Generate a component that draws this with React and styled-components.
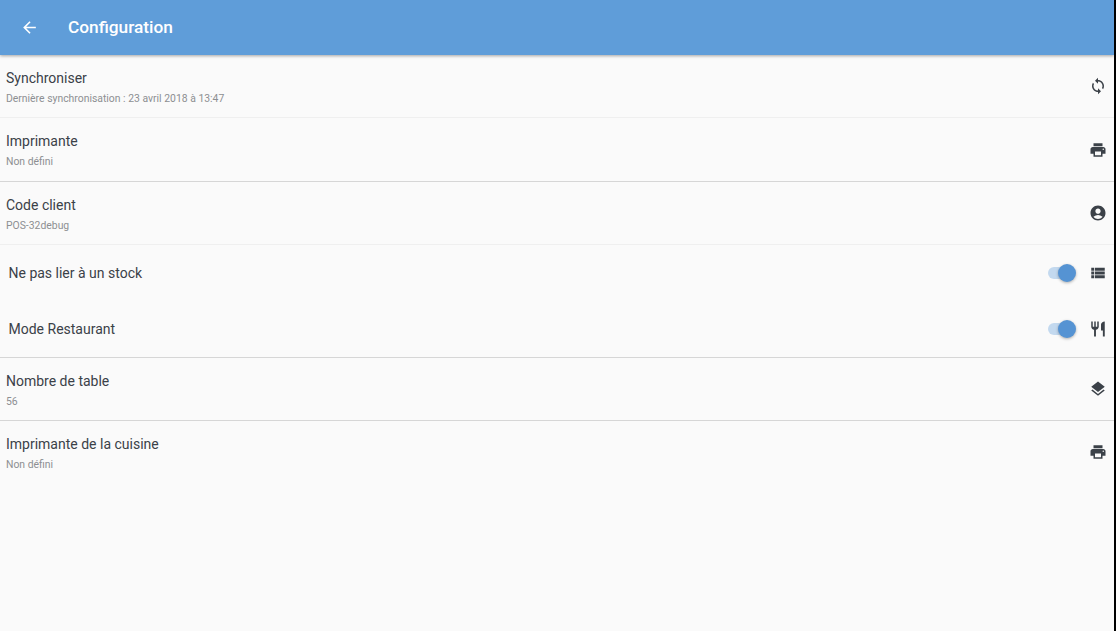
import React from 'react';
import styled, { createGlobalStyle } from 'styled-components';
import { MdArrowBack, MdSync, MdPrint, MdAccountCircle, MdViewList, MdRestaurant, MdLayers } from 'react-icons/md';

const GlobalStyle = createGlobalStyle`
  html, body {
    margin: 0;
    padding: 0;
    background: #000;
    overflow: hidden;
  }
  body {
    font-family: Roboto, "Liberation Sans", sans-serif;
  }
`;

const Page = styled.div`
  width: 1114px;
  height: 631px;
  background: #fafafa;
  display: flex;
  flex-direction: column;
`;

const Toolbar = styled.header`
  height: 55px;
  flex: none;
  background: #5f9dd9;
  color: #fff;
  display: flex;
  align-items: center;
  padding-left: 20px;
  box-shadow: 0 1px 3px rgba(0, 0, 0, 0.35);
  position: relative;
`;

const BackIcon = styled(MdArrowBack)`
  font-size: 19px;
  margin-top: -1px;
`;

const Title = styled.h1`
  margin: -1px 0 0 29px;
  font-size: 17.3px;
  font-weight: 500;
  color: #fff;
`;

const List = styled.div`
  display: flex;
  flex-direction: column;
`;

const Row = styled.div`
  height: ${p => p.$height}px;
  box-sizing: border-box;
  display: flex;
  align-items: center;
  justify-content: space-between;
  padding: 0 7px 0 6px;
  border-bottom: 1px solid ${p => (p.$line === 'strong' ? '#d6d6d6' : p.$line === 'light' ? '#efefef' : 'transparent')};
`;

const TextBlock = styled.div`
  display: flex;
  flex-direction: column;
  gap: 6px;
  padding-top: 3px;
`;

const Label = styled.div`
  font-size: 14px;
  line-height: 16px;
  color: #3b4148;
`;

const Sub = styled.div`
  font-size: 10.4px;
  line-height: 14px;
  color: #8d8f92;
`;

const ToggleLabel = styled(Label)`
  padding-left: 2.5px;
`;

const RowIcon = styled.span`
  display: flex;
  align-items: center;
  justify-content: center;
  width: 18px;
  height: 18px;
  font-size: ${p => p.$size || 18}px;
  color: #3b4148;
`;

const Controls = styled.div`
  display: flex;
  align-items: center;
  gap: 14px;
`;

const Switch = styled.span`
  display: block;
  position: relative;
  width: 27px;
  height: 12px;
  border-radius: 6px;
  background: #c3d9ef;
`;

const Knob = styled.span`
  position: absolute;
  top: -3px;
  right: -1px;
  width: 18px;
  height: 18px;
  border-radius: 50%;
  background: #5593d3;
  box-shadow: 0 1px 3px rgba(0, 0, 0, 0.3);
`;

const rows = [
  { type: 'info', label: 'Synchroniser', sub: 'Dernière synchronisation : 23 avril 2018 à 13:47', icon: MdSync, height: 63, line: 'light' },
  { type: 'info', label: 'Imprimante', sub: 'Non défini', icon: MdPrint, height: 64, line: 'strong' },
  { type: 'info', label: 'Code client', sub: 'POS-32debug', icon: MdAccountCircle, height: 63, line: 'light' },
  { type: 'toggle', label: 'Ne pas lier à un stock', icon: MdViewList, iconSize: 20, height: 56 },
  { type: 'toggle', label: 'Mode Restaurant', icon: MdRestaurant, height: 57, line: 'strong' },
  { type: 'info', label: 'Nombre de table', sub: '56', icon: MdLayers, height: 63, line: 'strong' },
  { type: 'info', label: 'Imprimante de la cuisine', sub: 'Non défini', icon: MdPrint, height: 63 },
];

const App = () => {
  return (
    <Page>
      <GlobalStyle />
      <Toolbar>
        <BackIcon />
        <Title>Configuration</Title>
      </Toolbar>
      <List>
        {rows.map(row => (
          <Row key={row.label} $height={row.height} $line={row.line}>
            {row.type === 'info' ? (
              <TextBlock>
                <Label>{row.label}</Label>
                <Sub>{row.sub}</Sub>
              </TextBlock>
            ) : (
              <ToggleLabel>{row.label}</ToggleLabel>
            )}
            <Controls>
              {row.type === 'toggle' && (
                <Switch>
                  <Knob />
                </Switch>
              )}
              <RowIcon $size={row.iconSize}>
                <row.icon />
              </RowIcon>
            </Controls>
          </Row>
        ))}
      </List>
    </Page>
  );
};

export default App;
